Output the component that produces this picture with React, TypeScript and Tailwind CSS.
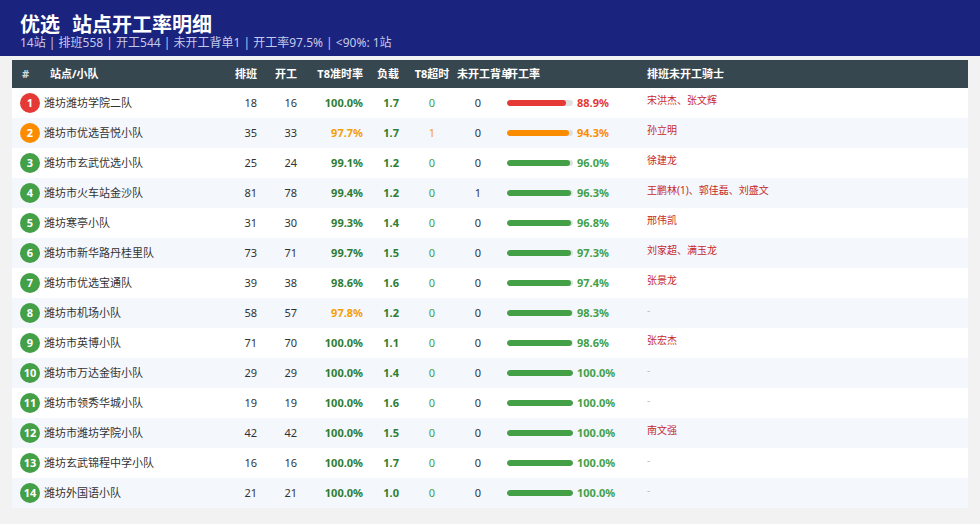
import React from "react";

type Row = {
  name: string;
  plan: number;
  work: number;
  t8: string;
  load: string;
  over: number;
  back: number;
  rate: number;
  riders: string;
};

const ROWS: Row[] = [
  { name: "潍坊潍坊学院二队", plan: 18, work: 16, t8: "100.0%", load: "1.7", over: 0, back: 0, rate: 88.9, riders: "宋洪杰、张文辉" },
  { name: "潍坊市优选吾悦小队", plan: 35, work: 33, t8: "97.7%", load: "1.7", over: 1, back: 0, rate: 94.3, riders: "孙立明" },
  { name: "潍坊市玄武优选小队", plan: 25, work: 24, t8: "99.1%", load: "1.2", over: 0, back: 0, rate: 96.0, riders: "徐建龙" },
  { name: "潍坊市火车站金沙队", plan: 81, work: 78, t8: "99.4%", load: "1.2", over: 0, back: 1, rate: 96.3, riders: "王鹏林(1)、郭佳磊、刘盛文" },
  { name: "潍坊寒亭小队", plan: 31, work: 30, t8: "99.3%", load: "1.4", over: 0, back: 0, rate: 96.8, riders: "邢伟凯" },
  { name: "潍坊市新华路丹桂里队", plan: 73, work: 71, t8: "99.7%", load: "1.5", over: 0, back: 0, rate: 97.3, riders: "刘家超、满玉龙" },
  { name: "潍坊市优选宝通队", plan: 39, work: 38, t8: "98.6%", load: "1.6", over: 0, back: 0, rate: 97.4, riders: "张景龙" },
  { name: "潍坊市机场小队", plan: 58, work: 57, t8: "97.8%", load: "1.2", over: 0, back: 0, rate: 98.3, riders: "" },
  { name: "潍坊市英博小队", plan: 71, work: 70, t8: "100.0%", load: "1.1", over: 0, back: 0, rate: 98.6, riders: "张宏杰" },
  { name: "潍坊市万达金街小队", plan: 29, work: 29, t8: "100.0%", load: "1.4", over: 0, back: 0, rate: 100.0, riders: "" },
  { name: "潍坊市领秀华城小队", plan: 19, work: 19, t8: "100.0%", load: "1.6", over: 0, back: 0, rate: 100.0, riders: "" },
  { name: "潍坊市潍坊学院小队", plan: 42, work: 42, t8: "100.0%", load: "1.5", over: 0, back: 0, rate: 100.0, riders: "南文强" },
  { name: "潍坊玄武锦程中学小队", plan: 16, work: 16, t8: "100.0%", load: "1.7", over: 0, back: 0, rate: 100.0, riders: "" },
  { name: "潍坊外国语小队", plan: 21, work: 21, t8: "100.0%", load: "1.0", over: 0, back: 0, rate: 100.0, riders: "" },
];

const GRID = "grid grid-cols-[30px_183px_40px_40px_66px_36px_50px_42px_140px_1fr]";

// colour by 开工率 level
const rateTone = (rate: number) => {
  if (rate < 90) return { badge: "bg-[#e53935]", bar: "bg-[#e53935]", text: "text-[#e53935]" };
  if (rate < 95) return { badge: "bg-[#fb8c00]", bar: "bg-[#fb8c00]", text: "text-[#fb8c00]" };
  return { badge: "bg-[#43a047]", bar: "bg-[#43a047]", text: "text-[#43a047]" };
};

const TableRow = ({ row, index }: { row: Row; index: number }) => {
  const tone = rateTone(row.rate);
  const t8Warn = parseFloat(row.t8) < 98;

  return (
    <div className={`${GRID} h-[30px] items-center text-[11px] text-[#333] ${index % 2 === 1 ? "bg-[#f4f7fc]" : "bg-white"}`}>
      <div className="pl-2">
        <span className={`flex h-5 w-5 items-center justify-center rounded-full text-[11px] font-bold text-white ${tone.badge}`}>
          {index + 1}
        </span>
      </div>
      <div className="truncate pl-[2px]">{row.name}</div>
      <div className="pr-2 text-right">{row.plan}</div>
      <div className="pr-2 text-right">{row.work}</div>
      <div className={`pr-2 text-right font-bold ${t8Warn ? "text-[#f5a000]" : "text-[#2e7d32]"}`}>{row.t8}</div>
      <div className="pr-2 text-right font-bold text-[#2e7d32]">{row.load}</div>
      <div className={`text-center ${row.over > 0 ? "text-[#f5a000]" : "text-[#43a047]"}`}>{row.over}</div>
      <div className="text-center">{row.back}</div>
      <div className="flex items-center pl-2">
        <div className="h-[6px] w-[66px] overflow-hidden rounded-full bg-[#e0e0e0]">
          <div className={`h-full rounded-full ${tone.bar}`} style={{ width: `${row.rate}%` }} />
        </div>
        <span className={`ml-[4px] font-bold ${tone.text}`}>{row.rate.toFixed(1)}%</span>
      </div>
      <div className="self-start pl-2 pt-[5px] text-[10px] leading-[14px]">
        {row.riders ? <span className="text-[#c62828]">{row.riders}</span> : <span className="text-[#bbb]">-</span>}
      </div>
    </div>
  );
};

export default function App() {
  return (
    <div
      className="min-h-[524px] w-[980px] bg-[#f2f2f2]"
      style={{ fontFamily: '"Noto Sans", "Noto Sans CJK SC", sans-serif' }}
    >
      {/* Title band */}
      <div className="h-[56px] bg-[#1a237e] px-5 pt-[14px]">
        <h1 className="text-[20px] font-bold leading-[22px] text-white">
          <span>优选</span>
          <span className="ml-3">站点开工率明细</span>
        </h1>
        <p className="text-[12px] leading-[14px] text-[#c5cae9]">
          14站 | 排班558 | 开工544 | 未开工背单1 | 开工率97.5% | &lt;90%: 1站
        </p>
      </div>

      {/* Table */}
      <div className="px-3 pt-1">
        <div className={`${GRID} h-[28px] items-center bg-[#37474f] text-[11px] font-bold text-white`}>
          <div className="pl-[10px] text-[#cfd8dc]">#</div>
          <div className="pl-2">站点/小队</div>
          <div className="pr-2 text-right">排班</div>
          <div className="pr-2 text-right">开工</div>
          <div className="pr-2 text-right">T8准时率</div>
          <div className="pr-2 text-right">负载</div>
          <div className="text-center">T8超时</div>
          <div className="whitespace-nowrap">未开工背单</div>
          <div className="pl-2">开工率</div>
          <div className="pl-2">排班未开工骑士</div>
        </div>
        {ROWS.map((row, i) => (
          <TableRow key={row.name} row={row} index={i} />
        ))}
      </div>
    </div>
  );
}
